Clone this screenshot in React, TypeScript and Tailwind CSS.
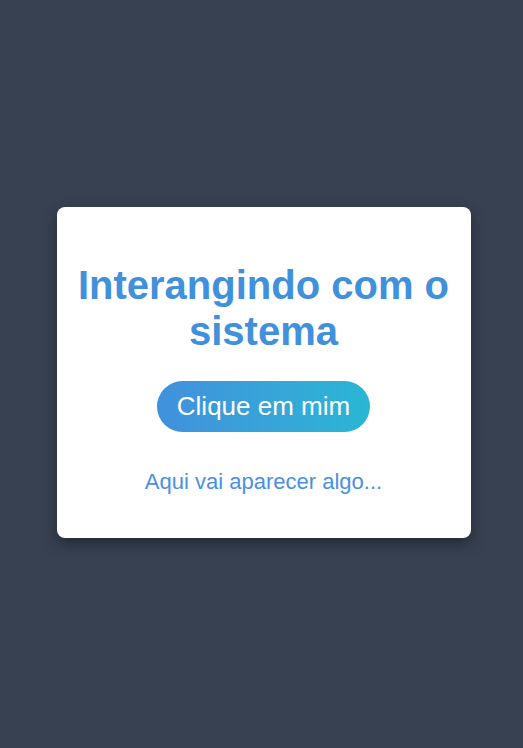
export default function App() {
  return (
    <div className="min-h-screen bg-[#374151] flex items-center justify-center pl-[4px] pb-[4px] font-['Liberation_Sans',Arial,sans-serif]">
      <div className="w-[414px] bg-white rounded-lg shadow-[0_6px_14px_rgba(0,0,0,0.35)] flex flex-col items-center pt-[55px] pb-[44px] text-center">
        <h1 className="text-[40px] leading-[46px] font-bold text-[#4190dc]">
          Interangindo com o
          <br />
          sistema
        </h1>
        <button className="mt-[27px] h-[51px] px-[20px] rounded-full bg-gradient-to-r from-[#4190dc] to-[#29b6d4] text-white text-[26px] leading-[30px]">
          Clique em mim
        </button>
        <p className="mt-[37px] text-[22px] leading-[25px] text-[#4a90e2]">Aqui vai aparecer algo...</p>
      </div>
    </div>
  )
}
